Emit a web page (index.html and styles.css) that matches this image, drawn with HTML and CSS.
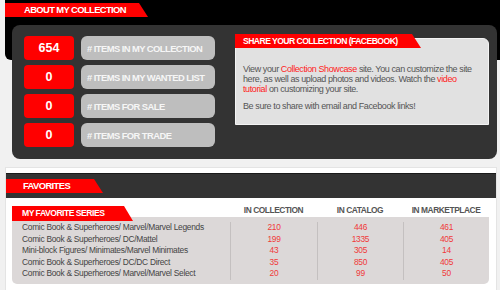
FILE: index.html
```html
<!DOCTYPE html>
<html lang="en">
<head>
    <meta charset="UTF-8">
    <meta name="viewport" content="width=device-width, initial-scale=1.0">
    <title>My Collection</title>
    <link rel="stylesheet" href="styles.css">
</head>
<body>

<!-- About my collection -->
<div class="about">
    <div class="about-band">
        <div class="tab tab-about">ABOUT MY COLLECTION</div>
    </div>
    <div class="about-panel">
        <div class="stats">
            <div class="stat"><span class="stat-count">654</span><span class="stat-label"># ITEMS IN MY COLLECTION</span></div>
            <div class="stat"><span class="stat-count">0</span><span class="stat-label"># ITEMS IN MY WANTED LIST</span></div>
            <div class="stat"><span class="stat-count">0</span><span class="stat-label"># ITEMS FOR SALE</span></div>
            <div class="stat"><span class="stat-count">0</span><span class="stat-label"># ITEMS FOR TRADE</span></div>
        </div>
        <div class="share">
            <div class="tab tab-share">SHARE YOUR COLLECTION (FACEBOOK)</div>
            <div class="share-body">
                <p>View your <a href="#">Collection Showcase</a> site. You can customize the site here, as well as upload photos and videos. Watch the <a href="#">video tutorial</a> on customizing your site.</p>
                <p>Be sure to share with email and Facebook links!</p>
            </div>
        </div>
    </div>
</div>

<!-- Favorites -->
<div class="favorites">
    <div class="fav-band">
        <div class="tab tab-fav">FAVORITES</div>
    </div>
    <div class="series">
        <div class="series-head">
            <div><div class="tab tab-series">MY FAVORITE SERIES</div></div>
            <div class="col-title">IN COLLECTION</div>
            <div class="col-title">IN CATALOG</div>
            <div class="col-title">IN MARKETPLACE</div>
        </div>
        <div class="series-body">
            <div class="series-col names">
                <span>Comic Book &amp; Superheroes/ Marvel/Marvel Legends</span>
                <span>Comic Book &amp; Superheroes/ DC/Mattel</span>
                <span>Mini-block Figures/ Minimates/Marvel Minimates</span>
                <span>Comic Book &amp; Superheroes/ DC/DC Direct</span>
                <span>Comic Book &amp; Superheroes/ Marvel/Marvel Select</span>
            </div>
            <div class="series-col nums">
                <span>210</span><span>199</span><span>43</span><span>35</span><span>20</span>
            </div>
            <div class="series-col nums">
                <span>446</span><span>1335</span><span>305</span><span>850</span><span>99</span>
            </div>
            <div class="series-col nums">
                <span>461</span><span>405</span><span>14</span><span>405</span><span>50</span>
            </div>
        </div>
    </div>
</div>

</body>
</html>
```

FILE: styles.css
```css
body {
    margin: 0;
    background-color: #f1f1f1;
    font-family: "Liberation Sans", Arial, sans-serif;
}

/* red title tabs with a slanted right edge */
.tab {
    position: relative;
    box-sizing: border-box;
    color: #fff;
    background-color: #f00;
    font-weight: bold;
    white-space: nowrap;
    clip-path: polygon(0 0, calc(100% - 9px) 0, 100% 100%, 0 100%);
}
.tab-about {
    width: 143px;
    height: 14px;
    line-height: 14px;
    padding-left: 19px;
    font-size: 9.4px;
    letter-spacing: -0.6px;
}
.tab-fav {
    width: 97px;
    height: 14px;
    line-height: 14px;
    padding-left: 17px;
    font-size: 9.4px;
    letter-spacing: -0.6px;
}
.tab-share {
    width: 186px;
    height: 14px;
    line-height: 14px;
    padding-left: 8px;
    margin-bottom: -10px;
    font-size: 8.6px;
    letter-spacing: -0.55px;
}
.tab-series {
    width: 121px;
    height: 15px;
    line-height: 15px;
    padding-left: 10px;
    font-size: 8.6px;
    letter-spacing: -0.5px;
}

/* about my collection */
.about-band {
    box-sizing: border-box;
    margin-left: 5px;
    height: 60px;
    padding-top: 3px;
    background-color: #000;
    border-bottom-left-radius: 6px;
}
.about-panel {
    display: flex;
    gap: 20px;
    margin: -35px 3px 0 12px;
    padding: 11px 8px 12px 12px;
    background-color: #333;
    border-radius: 8px;
}
.stats {
    display: flex;
    flex-direction: column;
    gap: 5px;
}
.stat {
    display: flex;
    gap: 7px;
    height: 24px;
}
.stat-count {
    display: flex;
    align-items: center;
    justify-content: center;
    width: 50px;
    background-color: #f00;
    border-radius: 4px;
    color: #fff;
    font-size: 12.5px;
    font-weight: bold;
}
.stat-label {
    display: flex;
    align-items: center;
    box-sizing: border-box;
    width: 134px;
    padding-left: 6px;
    background-color: #bebebe;
    border-radius: 6px;
    color: #f6f6f6;
    font-size: 9.4px;
    font-weight: bold;
    letter-spacing: -0.55px;
}
.share {
    flex: 1;
    margin-top: -2px;
}
.share-body {
    padding: 25px 7px 13px;
    background-color: #e1e1e1;
    border: 1px solid #f4f4f4;
    border-top-right-radius: 6px;
    color: #555;
    font-size: 9px;
    line-height: 10px;
    letter-spacing: -0.4px;
}
.share-body p {
    margin: 0;
}
.share-body p + p {
    margin-top: 7px;
}
.share-body a {
    color: #f22;
    text-decoration: none;
}

/* favorites */
.favorites {
    margin: 8px 3px 0 5px;
    padding-top: 5px;
    background-color: #fff;
    border: 1px solid #e4e4e4;
}
.fav-band {
    box-sizing: border-box;
    height: 25px;
    padding-top: 5px;
    background-color: #333;
    border-top: 1px solid #1a1a1a;
}
.series {
    padding: 8px 7px 6px 6px;
}
.series-head,
.series-body {
    display: grid;
    grid-template-columns: 218px 87px 86px 1fr;
}
.series-head {
    height: 15px;
}
.col-title {
    text-align: center;
    color: #555;
    font-size: 8.4px;
    font-weight: bold;
    line-height: 8px;
    letter-spacing: -0.45px;
}
.series-body {
    margin-top: -4px;
    padding: 5px 0 4px;
    background-color: #dcd8d8;
    border-radius: 0 0 5px 5px;
}
.series-col {
    display: flex;
    flex-direction: column;
    font-size: 8.4px;
    line-height: 11.6px;
    letter-spacing: -0.28px;
}
.names {
    padding-left: 10px;
    color: #444;
}
.nums {
    border-left: 1px solid #c4c0c0;
    text-align: center;
    color: #f03a3a;
}
```
